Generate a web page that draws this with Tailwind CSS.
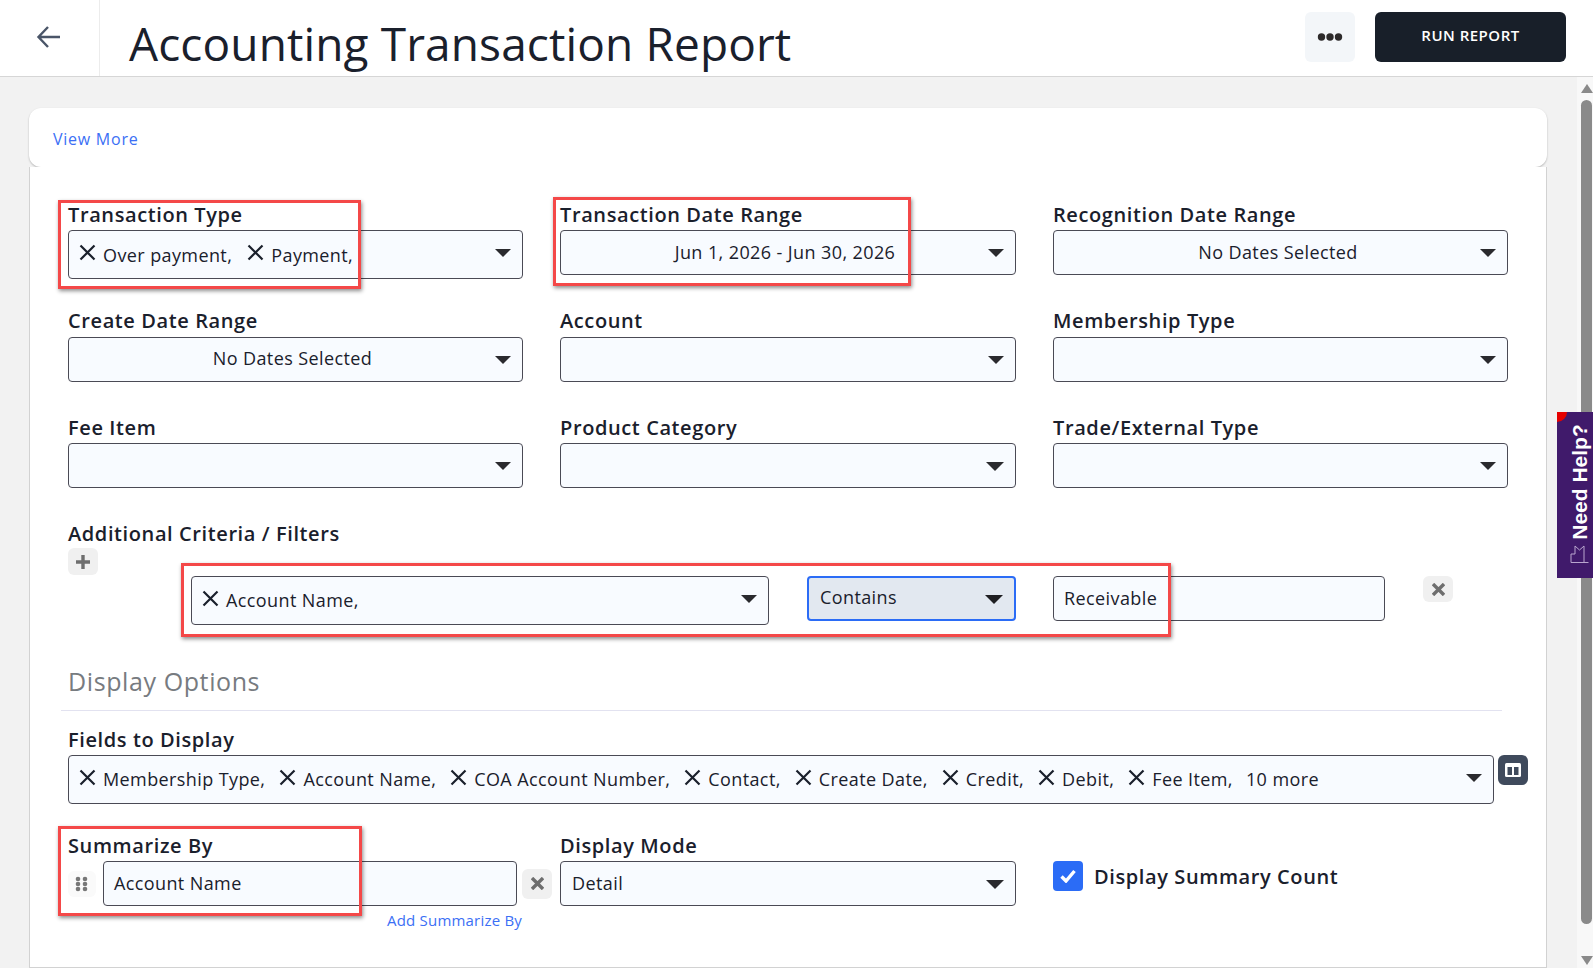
<!DOCTYPE html>
<html lang="en">
<head>
    <meta charset="UTF-8">
    <title>Accounting Transaction Report</title>
    <script src="https://cdn.jsdelivr.net/npm/@tailwindcss/browser@4"></script>
</head>
<body class="relative h-[968px] w-[1593px] overflow-hidden bg-white font-['Open_Sans',sans-serif] text-[#1a202c]">
    <!-- top bar -->
    <header class="flex h-[77px] items-stretch border-b border-[#d6d6d6] bg-white">
        <div class="flex w-[100px] items-center justify-center border-r border-[#ececec] pb-[3px] pr-[2px]">
            <svg class="h-[26px] w-[26px] text-[#4a5568]" viewBox="0 0 26 26" fill="none" stroke="currentColor" stroke-width="2.4"><path d="M24 13H3M12 3L2.5 13L12 23"/></svg>
        </div>
        <h1 class="ml-[29px] mt-[7px] text-[46px] leading-[72px] tracking-[0.12px] text-[#1a202c]">Accounting Transaction Report</h1>
        <div class="ml-auto flex gap-[20px] pr-[27px] pt-[12px]">
            <button class="flex h-[50px] w-[50px] items-center justify-center rounded-md bg-[#f3f6f9]">
                <svg class="h-[10px] w-[26px]" viewBox="0 0 26 10" fill="#2d2a2a"><circle cx="4.5" cy="5" r="3.7"/><circle cx="13" cy="5" r="3.7"/><circle cx="21.5" cy="5" r="3.7"/></svg>
            </button>
            <button class="h-[50px] w-[191px] rounded-md bg-[#181f29] pb-[3px] text-[15px] font-semibold tracking-[0.5px] text-white">RUN REPORT</button>
        </div>
    </header>

    <div class="flex h-[891px]">
        <main class="w-[1577px] bg-[#f2f2f2] pl-[29px] pt-[31px]">
            <div class="flex h-[59px] w-[1518px] items-center rounded-xl bg-white pl-[24px] pt-[2px] text-[16px] tracking-[0.75px] text-[#3b6ff5] shadow-[0_1px_2px_rgba(0,0,0,0.25)]">View More</div>

            <section class="h-[801px] w-[1518px] border-x border-b border-[#d2d2d2] bg-white pl-[38px] pt-[35px]">
                <div class="grid grid-cols-[455px_456px_455px] grid-rows-[107px_106px_104px] gap-x-[37px]">
                    <div>
                        <label class="block h-[28px] text-[20px] font-semibold leading-[26px] tracking-[0.6px]">Transaction Type</label>
                        <div class="relative flex h-[49px] items-center rounded border border-[#4a4a55] bg-[#f8fbff] pl-[10px] text-[18px] tracking-[0.4px]">
                            <span class="flex items-center"><svg class="-mt-[4px] h-[17px] w-[17px]" viewBox="0 0 17 17" stroke="#1a202c" stroke-width="2.2"><path d="M1.5 1.5L15.5 15.5M15.5 1.5L1.5 15.5"/></svg><span class="ml-[7px] mr-[15px] mt-[2px]">Over payment,</span></span>
                            <span class="flex items-center"><svg class="-mt-[4px] h-[17px] w-[17px]" viewBox="0 0 17 17" stroke="#1a202c" stroke-width="2.2"><path d="M1.5 1.5L15.5 15.5M15.5 1.5L1.5 15.5"/></svg><span class="ml-[7px] mt-[2px]">Payment,</span></span>
                            <svg class="absolute right-[11px] top-[18px] h-[8px] w-[16px]" viewBox="0 0 16 8" fill="#2a2a2e"><path d="M0 0H16L8 8Z"/></svg>
                        </div>
                    </div>
                    <div>
                        <label class="block h-[28px] text-[20px] font-semibold leading-[26px] tracking-[0.6px]">Transaction Date Range</label>
                        <div class="relative flex h-[45px] items-center justify-center rounded border border-[#4a4a55] bg-[#f8fbff] pr-[6px] text-[18px] tracking-[0.4px]">Jun 1, 2026 - Jun 30, 2026
                            <svg class="absolute right-[11px] top-[18px] h-[8px] w-[16px]" viewBox="0 0 16 8" fill="#2a2a2e"><path d="M0 0H16L8 8Z"/></svg>
                        </div>
                    </div>
                    <div>
                        <label class="block h-[28px] text-[20px] font-semibold leading-[26px] tracking-[0.6px]">Recognition Date Range</label>
                        <div class="relative flex h-[45px] items-center justify-center rounded border border-[#4a4a55] bg-[#f8fbff] pr-[5px] text-[18px] tracking-[0.4px]">No Dates Selected
                            <svg class="absolute right-[11px] top-[18px] h-[8px] w-[16px]" viewBox="0 0 16 8" fill="#2a2a2e"><path d="M0 0H16L8 8Z"/></svg>
                        </div>
                    </div>
                    <div>
                        <label class="-mt-[1px] block h-[29px] text-[20px] font-semibold leading-[26px] tracking-[0.6px]">Create Date Range</label>
                        <div class="relative flex h-[45px] items-center justify-center rounded border border-[#4a4a55] bg-[#f8fbff] pb-[2px] pr-[6px] text-[18px] tracking-[0.4px]">No Dates Selected
                            <svg class="absolute right-[11px] top-[18px] h-[8px] w-[16px]" viewBox="0 0 16 8" fill="#2a2a2e"><path d="M0 0H16L8 8Z"/></svg>
                        </div>
                    </div>
                    <div>
                        <label class="-mt-[1px] block h-[29px] text-[20px] font-semibold leading-[26px] tracking-[0.6px]">Account</label>
                        <div class="relative h-[45px] rounded border border-[#4a4a55] bg-[#f8fbff]">
                            <svg class="absolute right-[11px] top-[18px] h-[8px] w-[16px]" viewBox="0 0 16 8" fill="#2a2a2e"><path d="M0 0H16L8 8Z"/></svg>
                        </div>
                    </div>
                    <div>
                        <label class="-mt-[1px] block h-[29px] text-[20px] font-semibold leading-[26px] tracking-[0.6px]">Membership Type</label>
                        <div class="relative h-[45px] rounded border border-[#4a4a55] bg-[#f8fbff]">
                            <svg class="absolute right-[11px] top-[18px] h-[8px] w-[16px]" viewBox="0 0 16 8" fill="#2a2a2e"><path d="M0 0H16L8 8Z"/></svg>
                        </div>
                    </div>
                    <div>
                        <label class="block h-[28px] text-[20px] font-semibold leading-[26px] tracking-[0.6px]">Fee Item</label>
                        <div class="relative h-[45px] rounded border border-[#4a4a55] bg-[#f8fbff]">
                            <svg class="absolute right-[11px] top-[18px] h-[8px] w-[16px]" viewBox="0 0 16 8" fill="#2a2a2e"><path d="M0 0H16L8 8Z"/></svg>
                        </div>
                    </div>
                    <div>
                        <label class="block h-[28px] text-[20px] font-semibold leading-[26px] tracking-[0.6px]">Product Category</label>
                        <div class="relative h-[45px] rounded border border-[#4a4a55] bg-[#f8fbff]">
                            <svg class="absolute right-[11px] top-[18px] h-[9px] w-[18px]" viewBox="0 0 16 8" fill="#2a2a2e"><path d="M0 0H16L8 8Z"/></svg>
                        </div>
                    </div>
                    <div>
                        <label class="block h-[28px] text-[20px] font-semibold leading-[26px] tracking-[0.6px]">Trade/External Type</label>
                        <div class="relative h-[45px] rounded border border-[#4a4a55] bg-[#f8fbff]">
                            <svg class="absolute right-[11px] top-[18px] h-[8px] w-[16px]" viewBox="0 0 16 8" fill="#2a2a2e"><path d="M0 0H16L8 8Z"/></svg>
                        </div>
                    </div>
                </div>

                <!-- additional criteria -->
                <label class="mt-[2px] block h-[27px] text-[20px] font-semibold leading-[26px] tracking-[0.6px]">Additional Criteria / Filters</label>
                <button class="mb-[1px] flex h-[27px] w-[30px] items-center justify-center rounded-md bg-[#f0f0f0]">
                    <svg class="h-[14px] w-[14px]" viewBox="0 0 14 14" stroke="#6e6e6e" stroke-width="3.4"><path d="M7 0V14M0 7H14"/></svg>
                </button>
                <div class="ml-[123px] flex items-start gap-[38px]">
                    <div class="relative flex h-[49px] w-[578px] items-center rounded border border-[#4a4a55] bg-[#f8fbff] pl-[10px] text-[18px] tracking-[0.4px]">
                        <svg class="-mt-[4px] h-[17px] w-[17px]" viewBox="0 0 17 17" stroke="#1a202c" stroke-width="2.2"><path d="M1.5 1.5L15.5 15.5M15.5 1.5L1.5 15.5"/></svg><span class="ml-[7px]">Account Name,</span>
                        <svg class="absolute right-[11px] top-[18px] h-[8px] w-[16px]" viewBox="0 0 16 8" fill="#2a2a2e"><path d="M0 0H16L8 8Z"/></svg>
                    </div>
                    <div class="relative flex h-[45px] w-[209px] items-center rounded border-2 border-[#2b6cf6] bg-[#e2e8f0] pb-[2px] pl-[11px] text-[18px] tracking-[0.4px]">Contains
                        <svg class="absolute right-[11px] top-[17px] h-[9px] w-[18px]" viewBox="0 0 16 8" fill="#1f1f22"><path d="M0 0H16L8 8Z"/></svg>
                    </div>
                    <div class="-ml-[1px] flex h-[45px] w-[332px] items-center rounded border border-[#4a4a55] bg-[#f8fbff] pl-[10px] text-[18px] tracking-[0.4px]">Receivable</div>
                    <button class="flex h-[26px] w-[30px] items-center justify-center rounded-md bg-[#f0f0f0]">
                        <svg class="h-[13px] w-[13px]" viewBox="0 0 13 13" stroke="#6e6e6e" stroke-width="3.4"><path d="M1 1L12 12M12 1L1 12"/></svg>
                    </button>
                </div>

                <!-- display options -->
                <div class="-ml-[7px] mt-[42px] h-[44px] w-[1441px] border-b border-[#e2e2f0] pl-[7px] text-[25px] leading-[28px] tracking-[0.6px] text-[#777b80]">Display Options</div>
                <label class="mt-[16px] block h-[28px] text-[20px] font-semibold leading-[26px] tracking-[0.6px]">Fields to Display</label>
                <div class="flex items-start gap-[4px]">
                    <div class="relative flex h-[49px] w-[1426px] items-center rounded border border-[#4a4a55] bg-[#f8fbff] pl-[10px] text-[18px] tracking-[0.4px]">
                        <svg class="-mt-[4px] h-[17px] w-[17px]" viewBox="0 0 17 17" stroke="#1a202c" stroke-width="2.2"><path d="M1.5 1.5L15.5 15.5M15.5 1.5L1.5 15.5"/></svg><span class="ml-[7px] mr-[14px]">Membership Type,</span>
                        <svg class="-mt-[4px] h-[17px] w-[17px]" viewBox="0 0 17 17" stroke="#1a202c" stroke-width="2.2"><path d="M1.5 1.5L15.5 15.5M15.5 1.5L1.5 15.5"/></svg><span class="ml-[7px] mr-[14px]">Account Name,</span>
                        <svg class="-mt-[4px] h-[17px] w-[17px]" viewBox="0 0 17 17" stroke="#1a202c" stroke-width="2.2"><path d="M1.5 1.5L15.5 15.5M15.5 1.5L1.5 15.5"/></svg><span class="ml-[7px] mr-[14px]">COA Account Number,</span>
                        <svg class="-mt-[4px] h-[17px] w-[17px]" viewBox="0 0 17 17" stroke="#1a202c" stroke-width="2.2"><path d="M1.5 1.5L15.5 15.5M15.5 1.5L1.5 15.5"/></svg><span class="ml-[7px] mr-[14px]">Contact,</span>
                        <svg class="-mt-[4px] h-[17px] w-[17px]" viewBox="0 0 17 17" stroke="#1a202c" stroke-width="2.2"><path d="M1.5 1.5L15.5 15.5M15.5 1.5L1.5 15.5"/></svg><span class="ml-[7px] mr-[14px]">Create Date,</span>
                        <svg class="-mt-[4px] h-[17px] w-[17px]" viewBox="0 0 17 17" stroke="#1a202c" stroke-width="2.2"><path d="M1.5 1.5L15.5 15.5M15.5 1.5L1.5 15.5"/></svg><span class="ml-[7px] mr-[14px]">Credit,</span>
                        <svg class="-mt-[4px] h-[17px] w-[17px]" viewBox="0 0 17 17" stroke="#1a202c" stroke-width="2.2"><path d="M1.5 1.5L15.5 15.5M15.5 1.5L1.5 15.5"/></svg><span class="ml-[7px] mr-[14px]">Debit,</span>
                        <svg class="-mt-[4px] h-[17px] w-[17px]" viewBox="0 0 17 17" stroke="#1a202c" stroke-width="2.2"><path d="M1.5 1.5L15.5 15.5M15.5 1.5L1.5 15.5"/></svg><span class="ml-[7px] mr-[13px]">Fee Item,</span>
                        <span>10 more</span>
                        <svg class="absolute right-[11px] top-[18px] h-[8px] w-[16px]" viewBox="0 0 16 8" fill="#2a2a2e"><path d="M0 0H16L8 8Z"/></svg>
                    </div>
                    <button class="flex h-[30px] w-[30px] items-center justify-center rounded-md bg-[#3f4a5c]">
                        <svg class="h-[14px] w-[16px]" viewBox="0 0 16 14"><rect width="16" height="14" rx="1.5" fill="#fff"/><rect x="2.5" y="4" width="4.5" height="8" fill="#3f4a5c"/><rect x="9" y="4" width="4.5" height="8" fill="#3f4a5c"/></svg>
                    </button>
                </div>

                <div class="mt-[29px] grid grid-cols-[455px_456px_455px] gap-x-[37px]">
                    <div>
                        <label class="block h-[28px] text-[20px] font-semibold leading-[26px] tracking-[0.6px]">Summarize By</label>
                        <div class="flex w-[484px] items-center">
                            <span class="flex h-[26px] w-[28px] items-center justify-center rounded-md bg-[#fafafa]">
                                <svg class="h-[16px] w-[13px]" viewBox="0 0 13 16" fill="#777"><circle cx="3" cy="3" r="2.3"/><circle cx="10" cy="3" r="2.3"/><circle cx="3" cy="8" r="2.3"/><circle cx="10" cy="8" r="2.3"/><circle cx="3" cy="13" r="2.3"/><circle cx="10" cy="13" r="2.3"/></svg>
                            </span>
                            <div class="ml-[7px] flex h-[45px] w-[415px] items-center rounded border border-[#4a4a55] bg-[#f8fbff] pl-[10px] text-[18px] tracking-[0.4px]">Account Name</div>
                            <button class="ml-[5px] flex h-[30px] w-[30px] items-center justify-center rounded-md bg-[#f0f0f0]">
                                <svg class="h-[13px] w-[13px]" viewBox="0 0 13 13" stroke="#6e6e6e" stroke-width="3.4"><path d="M1 1L12 12M12 1L1 12"/></svg>
                            </button>
                        </div>
                        <div class="mt-[4px] pr-[1px] text-right text-[15px] leading-[20px] tracking-[0.2px] text-[#3b6ff5]">Add Summarize By</div>
                    </div>
                    <div>
                        <label class="block h-[28px] text-[20px] font-semibold leading-[26px] tracking-[0.6px]">Display Mode</label>
                        <div class="relative flex h-[45px] items-center rounded border border-[#4a4a55] bg-[#f8fbff] pl-[11px] text-[18px] tracking-[0.4px]">Detail
                            <svg class="absolute right-[11px] top-[18px] h-[9px] w-[18px]" viewBox="0 0 16 8" fill="#2a2a2e"><path d="M0 0H16L8 8Z"/></svg>
                        </div>
                    </div>
                    <div class="flex items-start gap-[11px] pt-[28px]">
                        <span class="flex h-[30px] w-[30px] items-center justify-center rounded bg-[#2b6cf6]">
                            <svg class="h-[14px] w-[16px]" viewBox="0 0 16 14" fill="none" stroke="#fff" stroke-width="3.4"><path d="M1.5 7.5L6 12L14.5 2"/></svg>
                        </span>
                        <span class="mt-[1px] text-[20px] font-semibold leading-[30px] tracking-[0.6px]">Display Summary Count</span>
                    </div>
                </div>
            </section>
        </main>

        <!-- scrollbar -->
        <div class="relative w-[16px] bg-[#f8f8f8]">
            <svg class="absolute left-[4px] top-[7px] h-[9px] w-[12px]" viewBox="0 0 12 9" fill="#8a8a8a"><path d="M6 0L12 9H0Z"/></svg>
            <div class="absolute left-[4px] top-[23px] h-[824px] w-[11px] rounded-full bg-[#8a8a8a]"></div>
            <svg class="absolute left-[4px] bottom-[3px] h-[9px] w-[12px]" viewBox="0 0 12 9" fill="#8a8a8a"><path d="M0 0H12L6 9Z"/></svg>
        </div>
    </div>

    <!-- need help tab -->
    <div class="absolute left-[1557px] top-[412px] h-[166px] w-[36px] overflow-hidden bg-[#401a6b]">
        <span class="absolute left-0 top-0 h-[10px] w-[10px] rounded-br-full bg-[#e60000]"></span>
        <span class="absolute left-[-52px] top-[57px] w-[150px] -rotate-90 text-center font-['Liberation_Sans',sans-serif] text-[21px] font-bold leading-[26px] text-white">Need Help?</span>
        <svg class="absolute left-[13px] top-[133px] h-[19px] w-[19px]" viewBox="0 0 19 19" fill="none" stroke="#b9a6cf" stroke-width="1"><path d="M5 1L9.5 5L14 1V17.5M18.5 17.5H1V9H5V1"/></svg>
    </div>

    <!-- red callouts drawn over the form -->
    <div class="pointer-events-none absolute left-[58px] top-[200px] h-[89px] w-[303px] border-[3px] border-[#f44848] shadow-[1px_2px_4px_rgba(0,0,0,0.45)]"></div>
    <div class="pointer-events-none absolute left-[553px] top-[197px] h-[89px] w-[358px] border-[3px] border-[#f44848] shadow-[1px_2px_4px_rgba(0,0,0,0.45)]"></div>
    <div class="pointer-events-none absolute left-[181px] top-[563px] h-[74px] w-[990px] border-[3px] border-[#f44848] shadow-[1px_2px_4px_rgba(0,0,0,0.45)]"></div>
    <div class="pointer-events-none absolute left-[58px] top-[826px] h-[90px] w-[304px] border-[3px] border-[#f44848] shadow-[1px_2px_4px_rgba(0,0,0,0.45)]"></div>
</body>
</html>
